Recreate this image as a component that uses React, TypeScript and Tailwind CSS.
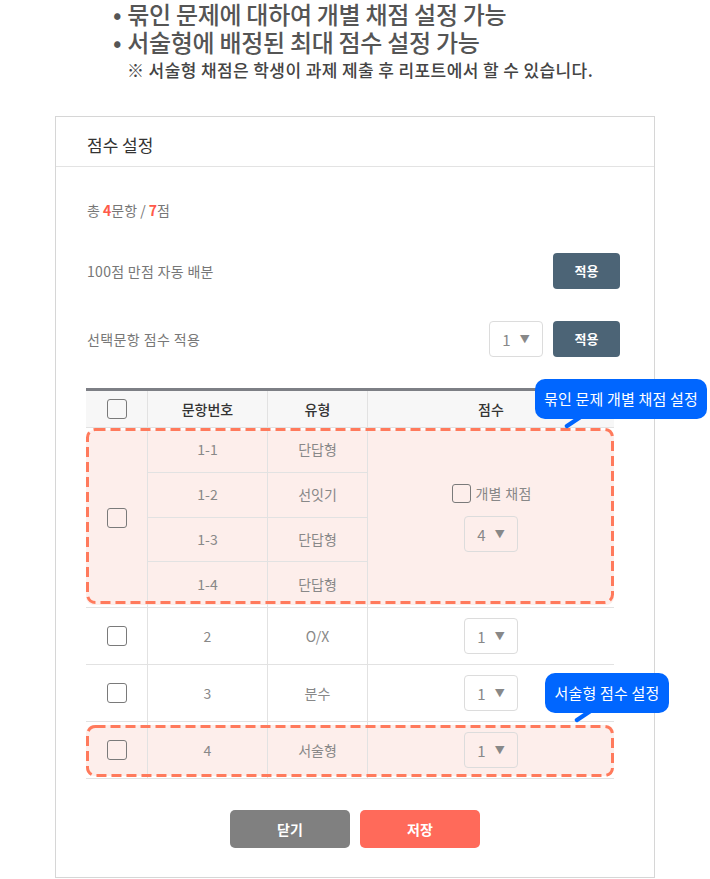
import React from 'react';

const Check = ({ size = 20 }: { size?: number }) => (
  <span
    className="inline-block shrink-0 rounded-[3px] border-[1.5px] border-[#7a7a7a]"
    style={{ width: size, height: size }}
  />
);

const Select = ({ value }: { value: string }) => (
  <div className="flex h-[36px] w-[54px] items-center justify-center gap-[9px] rounded-[4px] border border-[#dcdcdc] text-[#888]">
    <span className="text-[15px] leading-none">{value}</span>
    <span className="text-[10px] leading-none">▼</span>
  </div>
);

const DashBox = ({ w, h }: { w: number; h: number }) => (
  <svg className="pointer-events-none absolute left-0 top-0" width={w} height={h}>
    <rect
      x={1.5}
      y={1.5}
      width={w - 3}
      height={h - 3}
      rx={8}
      fill="none"
      stroke="#ff7a5c"
      strokeWidth={3}
      strokeDasharray="10 5"
    />
  </svg>
);

const Tip = ({ text, className }: { text: string; className: string }) => (
  <div className={`absolute ${className}`}>
    <div className="flex h-[40px] items-center justify-center rounded-[10px] bg-[#0066ff] text-[15px] tracking-[0.2px] text-white">
      {text}
    </div>
    <svg className="absolute left-[28px] top-[37px]" width="22" height="14">
      <line x1="16" y1="2" x2="4" y2="10" stroke="#0066ff" strokeWidth="4.5" strokeLinecap="round" />
    </svg>
  </div>
);

const cell = 'flex items-center justify-center border-l border-[#e2e2e2]';

export default function App() {
  const subRows = [
    ['1-1', '단답형'],
    ['1-2', '선잇기'],
    ['1-3', '단답형'],
    ['1-4', '단답형'],
  ];

  return (
    <div className="relative min-h-[879px] w-[710px] overflow-hidden bg-white font-['Noto_Sans_CJK_KR',sans-serif]">
      {/* intro */}
      <div className="pl-[113px] text-[#555]">
        <p className="text-[24px] font-medium leading-[28px] tracking-[-0.3px]">
          <span className="mr-[6px]">•</span>묶인 문제에 대하여 개별 채점 설정 가능
        </p>
        <p className="text-[24px] font-medium leading-[28px] tracking-[-0.3px]">
          <span className="mr-[6px]">•</span>서술형에 배정된 최대 점수 설정 가능
        </p>
        <p className="pl-[14px] pt-[3px] text-[17px] font-medium leading-[22px] tracking-[0.4px] text-[#444]">
          ※ 서술형 채점은 학생이 과제 제출 후 리포트에서 할 수 있습니다.
        </p>
      </div>

      {/* panel */}
      <div className="ml-[55px] mt-[35px] h-[762px] w-[600px] border border-[#d6d6d6]">
        <div className="flex h-[50px] items-center border-b border-[#e3e3e3] pl-[31px] pt-[6px] text-[17px] text-[#333]">
          점수 설정
        </div>

        <div className="pl-[31px] pr-[34px]">
          <p className="mt-[33px] text-[14px] leading-[20px] text-[#777]">
            총 <span className="font-bold text-[#ff5a4a]">4</span>문항 /{' '}
            <span className="font-bold text-[#ff5a4a]">7</span>점
          </p>

          <div className="mt-[33px] flex items-center justify-between">
            <span className="text-[14px] tracking-[0.3px] text-[#777]">100점 만점 자동 배분</span>
            <button className="h-[36px] w-[67px] rounded-[4px] bg-[#4c6476] text-[13px] font-bold text-white">
              적용
            </button>
          </div>

          <div className="mt-[32px] flex items-center justify-between">
            <span className="text-[14px] tracking-[0.4px] text-[#777]">선택문항 점수 적용</span>
            <div className="flex items-center gap-[10px]">
              <div className="bg-white">
                <Select value="1" />
              </div>
              <button className="h-[36px] w-[67px] rounded-[4px] bg-[#4c6476] text-[13px] font-bold text-white">
                적용
              </button>
            </div>
          </div>

          {/* table */}
          <div className="-ml-px mt-[31px] w-[528px] text-[14px] text-[#888]">
            <div className="grid h-[40px] grid-cols-[61px_120px_100px_247px] border-t-[3px] border-b border-[#7d7f85] border-b-[#e2e2e2] bg-[#f7f7f7] font-medium text-[#333]">
              <div className="flex items-center justify-center">
                <Check />
              </div>
              <div className={cell}>문항번호</div>
              <div className={cell}>유형</div>
              <div className={cell}>점수</div>
            </div>

            <div className="relative h-[180px] border-b border-[#e2e2e2]">
              <div className="absolute inset-x-0 bottom-[2px] top-[2px] rounded-[8px] bg-[#fdeeeb]" />
              <div className="relative grid h-full grid-cols-[61px_120px_100px_247px] grid-rows-4">
                <div className="row-span-4 flex items-center justify-center">
                  <Check />
                </div>
                {subRows.map(([no, type], i) => (
                  <React.Fragment key={no}>
                    <div
                      className={`col-start-2 ${cell} ${i < 3 ? 'border-b' : ''}`}
                      style={{ gridRow: i + 1 }}
                    >
                      {no}
                    </div>
                    <div
                      className={`col-start-3 ${cell} ${i < 3 ? 'border-b' : ''}`}
                      style={{ gridRow: i + 1 }}
                    >
                      {type}
                    </div>
                  </React.Fragment>
                ))}
                <div className="col-start-4 row-span-4 row-start-1 flex flex-col items-center justify-center gap-[12px] border-l border-[#e2e2e2]">
                  <div className="flex items-center gap-[4px] pl-[2px]">
                    <Check size={19} />
                    <span className="tracking-[0.3px]">개별 채점</span>
                  </div>
                  <Select value="4" />
                </div>
              </div>
              <DashBox w={528} h={176} />
            </div>

            {[
              ['2', 'O/X'],
              ['3', '분수'],
            ].map(([no, type]) => (
              <div
                key={no}
                className="grid h-[57px] grid-cols-[61px_120px_100px_247px] border-b border-[#e2e2e2]"
              >
                <div className="flex items-center justify-center">
                  <Check />
                </div>
                <div className={cell}>{no}</div>
                <div className={cell}>{type}</div>
                <div className={cell}>
                  <Select value="1" />
                </div>
              </div>
            ))}

            <div className="relative h-[57px] border-b border-[#e2e2e2]">
              <div className="absolute inset-x-0 bottom-[2px] top-[3px] rounded-[8px] bg-[#fdeeeb]" />
              <div className="relative grid h-full grid-cols-[61px_120px_100px_247px]">
                <div className="flex items-center justify-center">
                  <Check />
                </div>
                <div className={cell}>4</div>
                <div className={cell}>서술형</div>
                <div className={cell}>
                  <Select value="1" />
                </div>
              </div>
              <div className="absolute left-0 top-[3px]">
                <div className="relative">
                  <DashBox w={528} h={52} />
                </div>
              </div>
            </div>
          </div>
        </div>

        <div className="mt-[31px] flex justify-center gap-[10px]">
          <button className="h-[38px] w-[120px] rounded-[5px] bg-[#808080] text-[14px] font-bold text-white">
            닫기
          </button>
          <button className="h-[38px] w-[120px] rounded-[5px] bg-[#ff6a5a] text-[14px] font-bold text-white">
            저장
          </button>
        </div>
      </div>

      <Tip text="묶인 문제 개별 채점 설정" className="left-[535px] top-[379px] w-[172px]" />
      <Tip text="서술형 점수 설정" className="left-[545px] top-[673px] w-[124px]" />
    </div>
  );
}
